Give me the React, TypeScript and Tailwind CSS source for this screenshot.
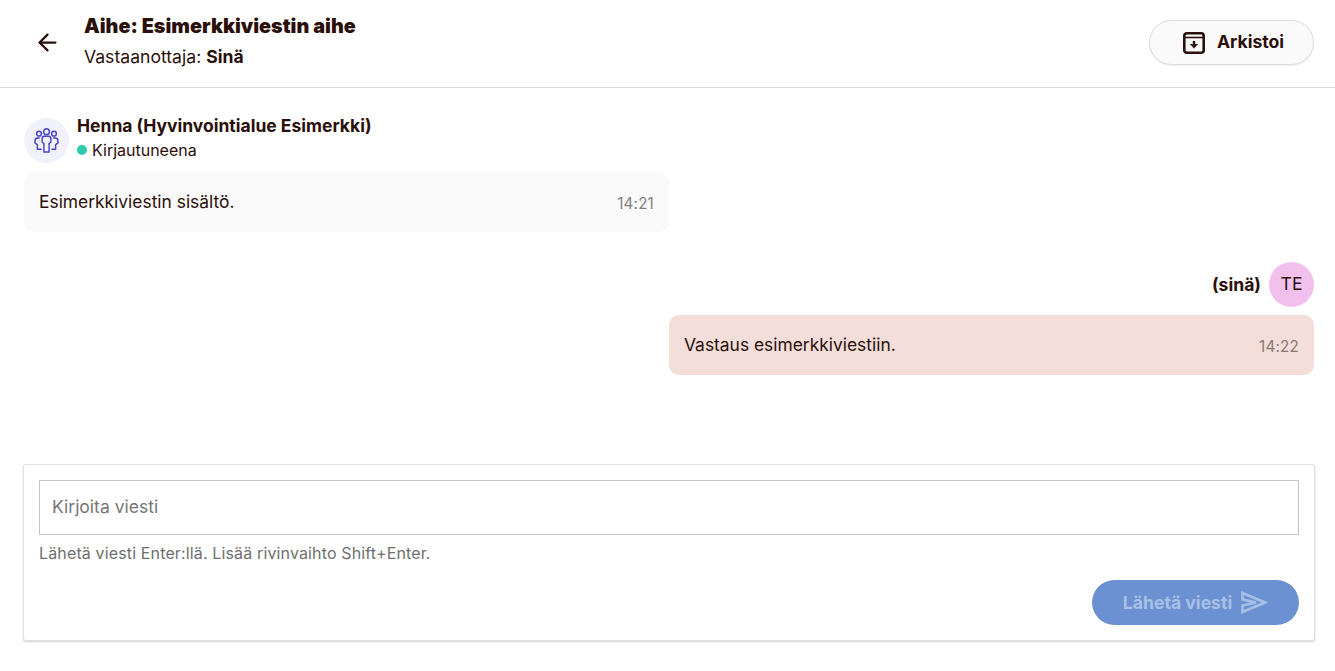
import { ArrowLeft } from 'lucide-react';

const FONT = "font-['Inter','Noto_Sans',sans-serif]";

function ArchiveIcon() {
  return (
    <svg className="w-[24px] h-[24px] text-[#2b0f0a]" viewBox="0 0 24 24" fill="none" stroke="currentColor" strokeWidth={2.6}>
      <rect x="2.300" y="2.300" width="19.400" height="19.400" rx="2.500" />
      <path d="M2 6.500h20" strokeWidth={1.600} />
      <path d="M12 10v4" strokeWidth={2.400} />
      <path d="M7.800 13h8.400L12 17.500z" fill="currentColor" stroke="none" />
    </svg>
  );
}

function TeamIcon() {
  return (
    <svg className="w-[27px] h-[27px] text-[#4a44c6]" viewBox="0 0 26 26" fill="none" stroke="currentColor" strokeWidth={1.400} strokeLinejoin="round" strokeLinecap="round">
      <circle cx="13" cy="4.500" r="2.800" />
      <circle cx="5.800" cy="6.400" r="2.300" />
      <circle cx="20.200" cy="6.400" r="2.300" />
      <path d="M8.800 11.200c0-1.300 1-2.200 2.200-2.200h4c1.200 0 2.200.9 2.200 2.200v3c0 .9-.7 1.400-1.700 1.600V24h-5v-8.200c-1-.2-1.700-.7-1.700-1.600z" />
      <path d="M6 10.600H4.800c-1.500 0-2.800 1.100-2.800 2.500v2.500l2.200 1.400v4.400h3.600" />
      <path d="M20 10.600h1.200c1.500 0 2.800 1.100 2.800 2.500v2.500l-2.200 1.400v4.400h-3.600" />
    </svg>
  );
}

function SendIcon() {
  return (
    <svg className="w-[27px] h-[23px] text-[#a9c0e6]" viewBox="0 0 27 23" fill="none" stroke="currentColor" strokeWidth={2.600} strokeLinejoin="miter">
      <path d="M1.500 2 24 11.500 1.500 21v-6.500L15 11.500 1.500 8.500z" />
    </svg>
  );
}

export default function App() {
  return (
    <div className={`${FONT} h-[671px] flex flex-col bg-white text-[#2b0f0a]`}>
      {/* Header */}
      <header className="h-[88px] shrink-0 flex items-center border-b border-[#dcdcdc] pl-[34px] pr-[21px] pb-[2px]">
        <ArrowLeft className="w-[27px] h-[27px] mr-[23px]" strokeWidth={2} />
        <div className="flex-1 min-w-0 pb-[3px]">
          <h1 className="text-[19.800px] leading-[26px] font-black">Aihe: Esimerkkiviestin aihe</h1>
          <p className="text-[17.600px] leading-[24px] mt-[6px]">
            Vastaanottaja: <span className="font-bold">Sinä</span>
          </p>
        </div>
        <button className="w-[165px] h-[45px] pl-[3px] flex items-center justify-center gap-[11px] rounded-full border border-[#dcdcdc] bg-[#fafafa] text-[17.600px] font-bold shadow-[0_1px_1px_rgba(0,0,0,0.06)]">
          <ArchiveIcon />
          Arkistoi
        </button>
      </header>

      <main className="flex-1 min-h-0 flex flex-col pl-6 pr-[21px] pt-[30px] pb-[30px]">
        {/* Received message */}
        <div className="flex items-start gap-2">
          <div className="w-[45px] h-[45px] rounded-full bg-[#f1f1fc] flex items-center justify-center">
            <TeamIcon />
          </div>
          <div>
            <div className="text-[17.500px] leading-[15px] font-bold">Henna (Hyvinvointialue Esimerkki)</div>
            <div className="flex items-center gap-[5px] mt-[7px] text-base leading-[20px]">
              <span className="w-[10px] h-[10px] rounded-full bg-[#2dcbae]" />
              Kirjautuneena
            </div>
          </div>
        </div>
        <div className="w-[645px] h-[60px] mt-[9px] rounded-[10px] bg-[#fafafa] flex items-center justify-between px-[15px]">
          <span className="text-[17.400px]">Esimerkkiviestin sisältö.</span>
          <span className="text-[15.200px] tracking-[0.2px] text-[#7f7f7f] pt-[4px]">14:21</span>
        </div>

        {/* Own message */}
        <div className="flex items-center justify-end gap-2 mt-[30px]">
          <span className="text-[17.600px] font-bold pt-[1px]">(sinä)</span>
          <div className="w-[45px] h-[45px] rounded-full bg-[#f2c0ec] flex items-center justify-center text-[17.600px]">TE</div>
        </div>
        <div className="w-[645px] h-[60px] mt-2 self-end rounded-[10px] bg-[#f3ded9] flex items-center justify-between px-[15px]">
          <span className="text-[17.400px]">Vastaus esimerkkiviestiin.</span>
          <span className="text-[15.200px] tracking-[0.2px] text-[#857875] pt-[4px]">14:22</span>
        </div>

        {/* Composer */}
        <div className="mt-auto -mx-px h-[177px] rounded-[3px] border border-[#e2e2e2] bg-white shadow-[0_1px_2px_rgba(0,0,0,0.2)] px-[15px] pt-[15px]">
          <div className="h-[55px] border border-[#c4c4c4] flex items-center px-3 text-[17.500px] text-[#767676]">Kirjoita viesti</div>
          <p className="mt-2 text-base tracking-[0.14px] leading-[20px] text-[#6f6f6f]">Lähetä viesti Enter:llä. Lisää rivinvaihto Shift+Enter.</p>
          <div className="flex justify-end mt-[17px]">
            <button className="w-[207px] h-[45px] rounded-full bg-[#6b91d2] flex items-center justify-center gap-[9px] text-[17.600px] font-bold text-[#a9c0e6]">
              <span className="pt-[1px]">Lähetä viesti</span>
              <SendIcon />
            </button>
          </div>
        </div>
      </main>
    </div>
  );
}
